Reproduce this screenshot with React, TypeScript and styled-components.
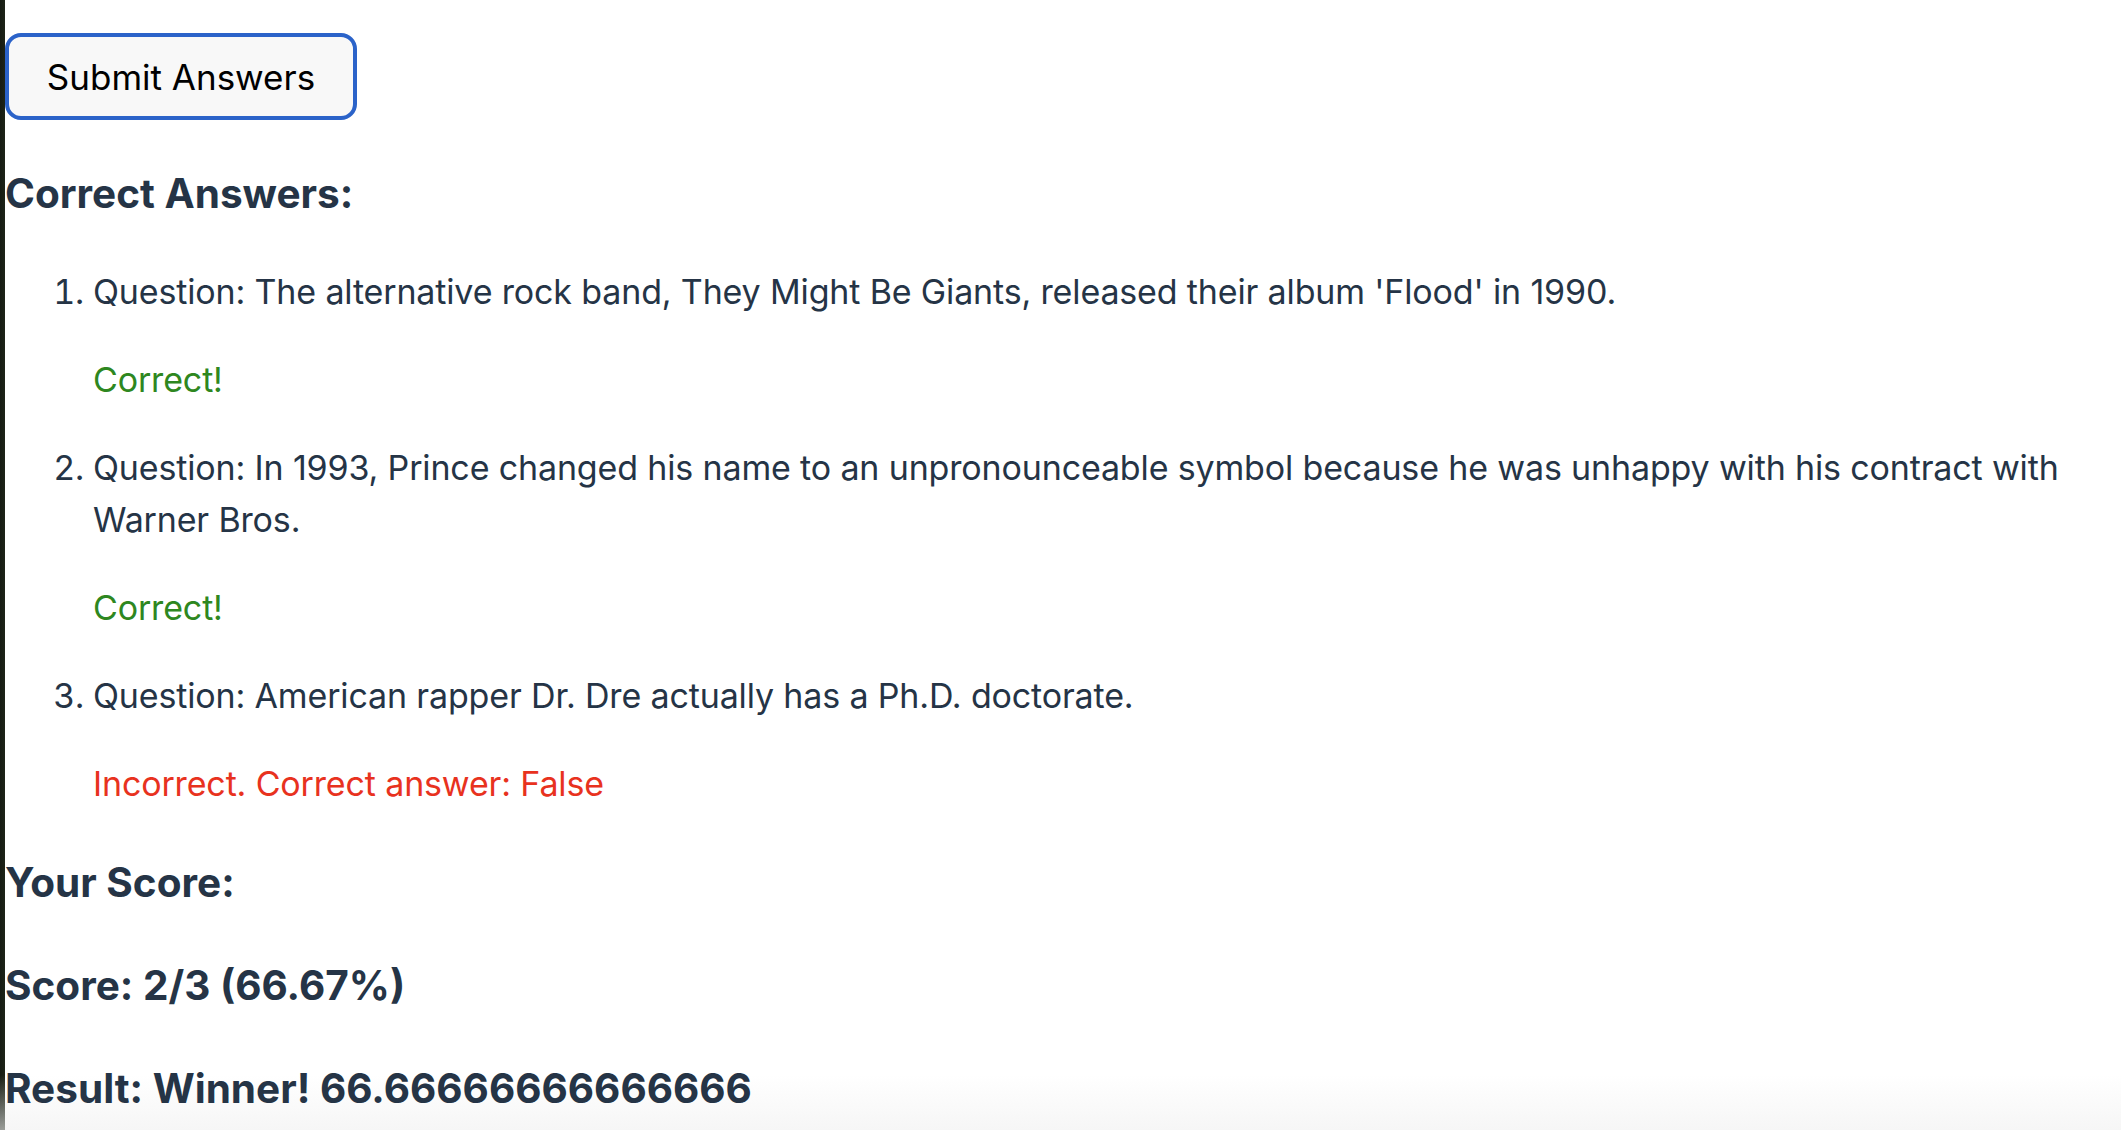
import React from "react";
import styled, { createGlobalStyle } from "styled-components";

const GlobalStyle = createGlobalStyle`
  html, body {
    margin: 0;
    padding: 0;
  }
  body {
    min-height: 1130px;
    background:
      linear-gradient(to bottom, rgba(255,255,255,0) 0, rgba(255,255,255,0) 1075px, rgba(240,240,240,0.6) 1130px),
      linear-gradient(to right, #161b13 0, #1d2418 5px, #ffffff 5px);
    font-family: Inter, "Noto Sans", "Liberation Sans", sans-serif;
    color: #253446;
  }
`;

const Page = styled.main`
  display: flex;
  flex-direction: column;
  align-items: flex-start;
  padding: 33px 0 0 5px;
`;

const SubmitButton = styled.button`
  width: 352px;
  height: 87px;
  box-sizing: border-box;
  border: 4px solid #2b63c9;
  border-radius: 16px;
  background: #f8f8f8;
  color: #000;
  font-family: Inter, "Noto Sans", sans-serif;
  font-size: 35px;
  font-weight: 400;
  cursor: pointer;
`;

const Heading = styled.h3<{ $top: number }>`
  margin: ${(p) => p.$top}px 0 0;
  font-size: 40.5px;
  line-height: 48px;
  font-weight: 700;
  color: #253446;
`;

const AnswerList = styled.ol`
  margin: 48px 0 0;
  padding: 0 0 0 88px;
  display: flex;
  flex-direction: column;
  gap: 36px;
  font-size: 34px;
  letter-spacing: -0.15px;
  line-height: 52px;
  color: #253446;
`;

const Item = styled.li`
  display: list-item;
`;

const Question = styled.p`
  margin: 0;
`;

const Feedback = styled.p<{ $ok: boolean }>`
  margin: 36px 0 0;
  color: ${(p) => (p.$ok ? "#2e8720" : "#e8321e")};
`;

const answers = [
  {
    q: "The alternative rock band, They Might Be Giants, released their album 'Flood' in 1990.",
    ok: true,
    text: "Correct!",
  },
  {
    q: "In 1993, Prince changed his name to an unpronounceable symbol because he was unhappy with his contract with Warner Bros.",
    ok: true,
    text: "Correct!",
  },
  {
    q: "American rapper Dr. Dre actually has a Ph.D. doctorate.",
    ok: false,
    text: "Incorrect. Correct answer: False",
  },
];

export default function App() {
  return (
    <>
      <GlobalStyle />
      <Page>
        <SubmitButton>Submit Answers</SubmitButton>
        <Heading $top={50}>Correct Answers:</Heading>
        <AnswerList>
          {answers.map((a, i) => (
            <Item key={i}>
              <Question>Question: {a.q}</Question>
              <Feedback $ok={a.ok}>{a.text}</Feedback>
            </Item>
          ))}
        </AnswerList>
        <Heading $top={49}>Your Score:</Heading>
        <Heading $top={55}>Score: 2/3 (66.67%)</Heading>
        <Heading $top={55}>Result: Winner! 66.66666666666666</Heading>
      </Page>
    </>
  );
}
